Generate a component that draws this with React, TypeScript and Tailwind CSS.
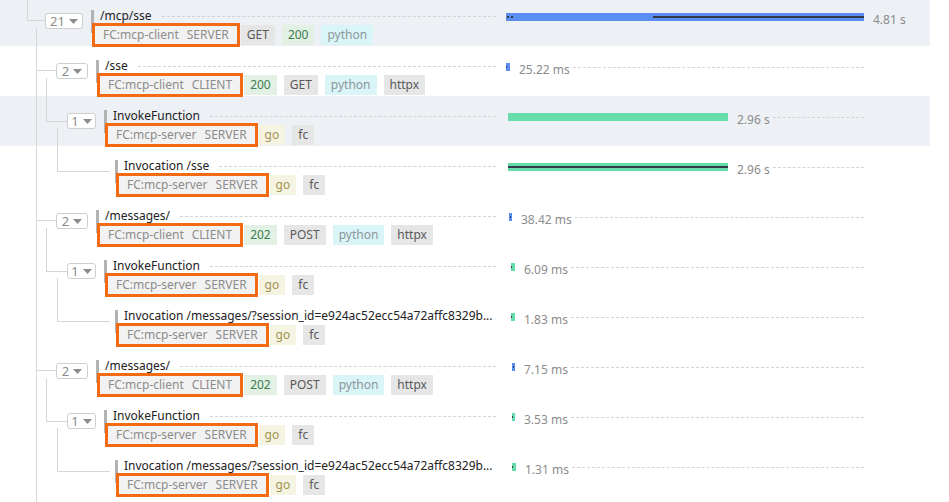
type Span = {
  depth: 0 | 1 | 2 | 3
  count?: number
  title: string
  service: string
  kind: string
  tags: string[]
  color: 'blue' | 'green'
  offset: number
  width: number
  marks: { left: number; width: number }[]
  duration: string
  active?: boolean
}

const spans: Span[] = [
  {
    depth: 0,
    count: 21,
    title: '/mcp/sse',
    service: 'FC:mcp-client',
    kind: 'SERVER',
    tags: ['GET', '200', 'python'],
    color: 'blue',
    offset: 0,
    width: 358,
    marks: [
      { left: 1, width: 2 },
      { left: 5, width: 2 },
      { left: 147, width: 211 },
    ],
    duration: '4.81 s',
    active: true,
  },
  {
    depth: 1,
    count: 2,
    title: '/sse',
    service: 'FC:mcp-client',
    kind: 'CLIENT',
    tags: ['200', 'GET', 'python', 'httpx'],
    color: 'blue',
    offset: 0,
    width: 4,
    marks: [{ left: 0, width: 1 }],
    duration: '25.22 ms',
  },
  {
    depth: 2,
    count: 1,
    title: 'InvokeFunction',
    service: 'FC:mcp-server',
    kind: 'SERVER',
    tags: ['go', 'fc'],
    color: 'green',
    offset: 2,
    width: 220,
    marks: [],
    duration: '2.96 s',
    active: true,
  },
  {
    depth: 3,
    title: 'Invocation /sse',
    service: 'FC:mcp-server',
    kind: 'SERVER',
    tags: ['go', 'fc'],
    color: 'green',
    offset: 2,
    width: 220,
    marks: [{ left: 0, width: 220 }],
    duration: '2.96 s',
  },
  {
    depth: 1,
    count: 2,
    title: '/messages/',
    service: 'FC:mcp-client',
    kind: 'CLIENT',
    tags: ['202', 'POST', 'python', 'httpx'],
    color: 'blue',
    offset: 3,
    width: 3,
    marks: [{ left: 1, width: 1 }],
    duration: '38.42 ms',
  },
  {
    depth: 2,
    count: 1,
    title: 'InvokeFunction',
    service: 'FC:mcp-server',
    kind: 'SERVER',
    tags: ['go', 'fc'],
    color: 'green',
    offset: 5,
    width: 4,
    marks: [{ left: 0, width: 1 }],
    duration: '6.09 ms',
  },
  {
    depth: 3,
    title: 'Invocation /messages/?session_id=e924ac52ecc54a72affc8329b...',
    service: 'FC:mcp-server',
    kind: 'SERVER',
    tags: ['go', 'fc'],
    color: 'green',
    offset: 5,
    width: 4,
    marks: [{ left: 0, width: 1 }],
    duration: '1.83 ms',
  },
  {
    depth: 1,
    count: 2,
    title: '/messages/',
    service: 'FC:mcp-client',
    kind: 'CLIENT',
    tags: ['202', 'POST', 'python', 'httpx'],
    color: 'blue',
    offset: 6,
    width: 3,
    marks: [{ left: 1, width: 1 }],
    duration: '7.15 ms',
  },
  {
    depth: 2,
    count: 1,
    title: 'InvokeFunction',
    service: 'FC:mcp-server',
    kind: 'SERVER',
    tags: ['go', 'fc'],
    color: 'green',
    offset: 6,
    width: 3,
    marks: [{ left: 0, width: 1 }],
    duration: '3.53 ms',
  },
  {
    depth: 3,
    title: 'Invocation /messages/?session_id=e924ac52ecc54a72affc8329b...',
    service: 'FC:mcp-server',
    kind: 'SERVER',
    tags: ['go', 'fc'],
    color: 'green',
    offset: 6,
    width: 4,
    marks: [{ left: 0, width: 1 }],
    duration: '1.31 ms',
  },
]

const indent = {
  0: 'pl-[45px]',
  1: 'pl-[56px]',
  2: 'pl-[67px]',
  3: 'pl-[115px]',
}

const buttonWidth = {
  0: 'w-[38px]',
  1: 'w-[32px]',
  2: 'w-[29px]',
  3: 'w-[29px]',
}

function tagClass(tag: string) {
  if (tag === '200' || tag === '202') return 'bg-[#e3f1e5] text-[#3c7c50]'
  if (tag === 'python') return 'bg-[#d9f5f8] text-[#8d969a]'
  if (tag === 'go') return 'bg-[#f5f3e2] text-[#a39452]'
  return 'bg-[#e6e6e6] text-[#595959]'
}

function TreeLines() {
  return (
    <svg
      className="pointer-events-none absolute left-0 top-0"
      width="130"
      height="502"
      shapeRendering="crispEdges"
    >
      <g stroke="#d6d6d6" strokeWidth="1" fill="none">
        <path d="M27.5 0 V20.5 H45" />
        <path d="M36.5 28 V502" />
        <path d="M36.5 70.5 H56" />
        <path d="M36.5 220.5 H56" />
        <path d="M36.5 370.5 H56" />
        <path d="M46.5 78 V121.5 H67" />
        <path d="M46.5 228 V271.5 H67" />
        <path d="M46.5 378 V421.5 H67" />
        <path d="M57.5 128 V171.5 H110" />
        <path d="M57.5 278 V321.5 H110" />
        <path d="M57.5 428 V471.5 H110" />
      </g>
    </svg>
  )
}

function SpanRow({ span }: { span: Span }) {
  return (
    <div
      className={`flex h-[50px] w-[930px] ${span.active ? 'bg-[#edf0f5]' : ''}`}
    >
      <div className={`flex w-[496px] shrink-0 ${indent[span.depth]}`}>
        {span.count !== undefined && (
          <div
            className={`mr-[8px] mt-[17px] flex h-[16px] shrink-0 items-center justify-center gap-[4px] rounded-[3px] border border-[#cfcfcf] bg-white text-[13px] leading-none text-[#8c8c8c] ${buttonWidth[span.depth]}`}
          >
            <span>{span.count}</span>
            <svg width="9" height="5" viewBox="0 0 9 5">
              <path d="M0 0 H9 L4.5 5 Z" fill="#8c8c8c" />
            </svg>
          </div>
        )}
        <div className="mt-[14px] h-[23px] w-[3px] shrink-0 bg-[#b3b3b3]" />
        <div className="ml-[6px] flex min-w-0 flex-1 flex-col pt-[12px]">
          <div className="flex h-[16px] items-center">
            <span className="whitespace-nowrap text-[12px] leading-[16px] text-[#222]">
              {span.title}
            </span>
            <div className="ml-[10px] h-0 min-w-0 flex-1 border-t border-dashed border-[#d4d4d4]" />
          </div>
          <div className="mt-[1px] flex h-[20px] items-center text-[12px] leading-[20px]">
            <span className="-ml-[6px] flex h-[20px] items-center gap-[8px] bg-[#f2f2f2] px-[9px] text-[#8c8c8c] outline-3 outline-offset-[-1px] outline-solid outline-[#f26a12]">
              <span>{span.service}</span>
              <span>{span.kind}</span>
            </span>
            {span.tags.map((tag, i) => (
              <span
                key={tag}
                className={`h-[20px] px-[6px] ${i === 0 ? 'ml-[3px]' : 'ml-[7px]'} ${tagClass(tag)}`}
              >
                {tag}
              </span>
            ))}
          </div>
        </div>
      </div>

      <div className="ml-[10px] mt-[17px] flex h-[8px] w-[358px] shrink-0 items-center">
        <div
          className={`flex h-[8px] shrink-0 items-center ${span.color === 'blue' ? 'bg-[#5b8ef2]' : 'bg-[#66dcab]'}`}
          style={{ marginLeft: span.offset, width: span.width }}
        >
          {span.marks.map((m, i) => (
            <span
              key={i}
              className="absolute h-[2px] bg-[#343a4b]"
              style={{ marginLeft: m.left, width: m.width }}
            />
          ))}
        </div>
        <span className="ml-[9px] mt-[6px] shrink-0 whitespace-nowrap text-[12px] leading-[16px] text-[#8c8c8c]">
          {span.duration}
        </span>
        <div className="ml-[3px] h-0 min-w-0 flex-1 border-t border-dashed border-[#d4d4d4]" />
      </div>
    </div>
  )
}

function App() {
  return (
    <main
      className="relative h-[502px] w-[949px] overflow-hidden bg-white"
      style={{ fontFamily: '"Noto Sans", "Open Sans", sans-serif' }}
    >
      <div className="-mt-[4px]">
        {spans.map((span, i) => (
          <SpanRow key={i} span={span} />
        ))}
      </div>
      <TreeLines />
    </main>
  )
}

export default App
